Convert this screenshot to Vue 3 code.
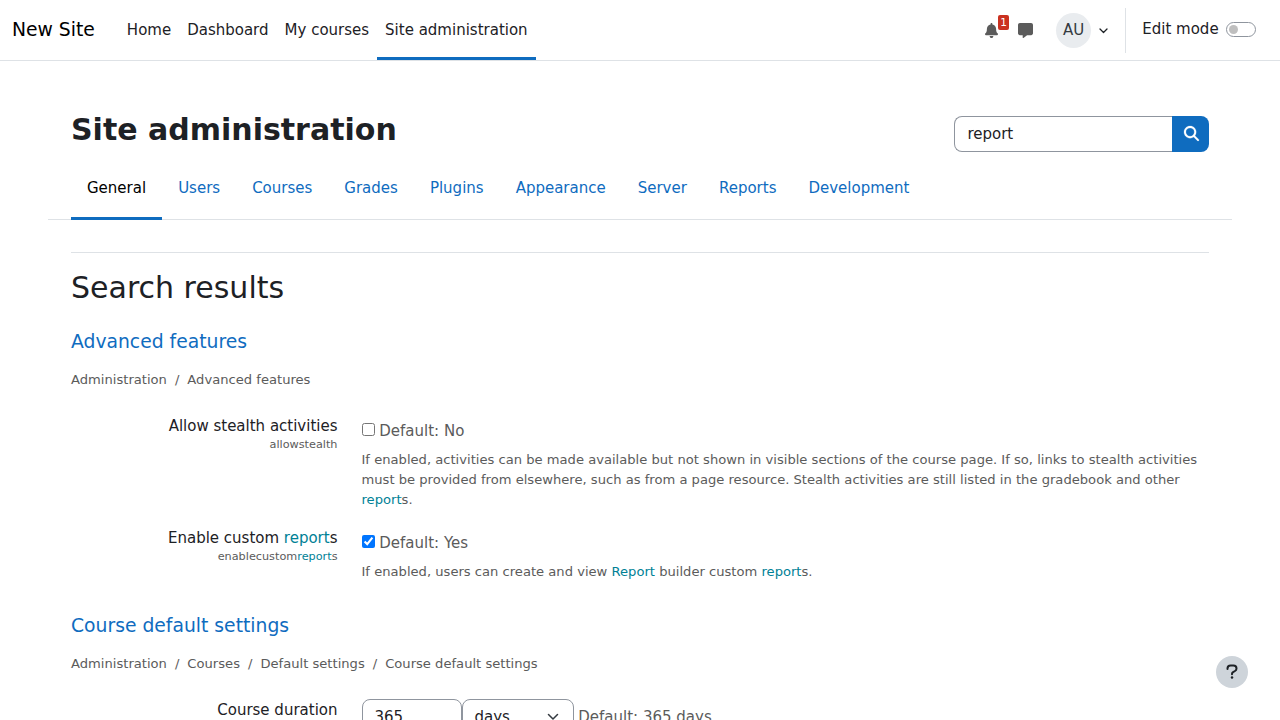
<script setup>
const menu = ['Home', 'Dashboard', 'My courses', 'Site administration']
const tabs = ['General', 'Users', 'Courses', 'Grades', 'Plugins', 'Appearance', 'Server', 'Reports', 'Development']
const crumbsA = ['Administration', 'Advanced features']
const crumbsB = ['Administration', 'Courses', 'Default settings', 'Course default settings']
</script>

<template>
  <div class="page">
    <nav class="navbar">
      <a class="brand">New Site</a>
      <ul class="menu">
        <li v-for="m in menu" :key="m" :class="{ active: m === 'Site administration' }">{{ m }}</li>
      </ul>
      <div class="usernav">
        <div class="bell">
          <svg width="13" height="15" viewBox="0 0 448 512" fill="#5b5b5b"><path d="M224 0c-17.700 0-32 14.300-32 32l0 19.200C119 66 64 130.600 64 208l0 18.800c0 47-17.300 92.400-48.500 127.600l-7.400 8.300c-8.400 9.400-10.400 22.900-5.300 34.400S19.400 416 32 416l384 0c12.600 0 24-7.400 29.200-18.900s3.100-25-5.300-34.400l-7.400-8.300C401.300 319.200 384 273.900 384 226.800l0-18.800c0-77.400-55-142-128-156.800L256 32c0-17.700-14.300-32-32-32zm45.300 493.300c12-12 18.700-28.300 18.700-45.300l-128 0c0 17 6.700 33.300 18.700 45.300s28.300 18.700 45.300 18.700s33.300-6.700 45.300-18.700z"/></svg>
          <span class="count">1</span>
        </div>
        <svg class="chat" width="15" height="15" viewBox="0 0 512 512" fill="#5b5b5b"><path d="M64 0C28.700 0 0 28.700 0 64L0 352c0 35.300 28.700 64 64 64l96 0 0 80c0 6.100 3.400 11.600 8.800 14.300s11.900 2.100 16.800-1.500L309.300 416 448 416c35.300 0 64-28.700 64-64l0-288c0-35.300-28.700-64-64-64L64 0z"/></svg>
        <span class="avatar">AU</span>
        <svg class="caret" width="9" height="6" viewBox="0 0 9 6" fill="none" stroke="#1d2125" stroke-width="1.300" stroke-linecap="round" stroke-linejoin="round"><path d="M1 1l3.500 3.500L8 1"/></svg>
        <span class="divider"></span>
        <span class="edit">Edit mode</span>
        <span class="switch"></span>
      </div>
    </nav>

    <main class="content">
      <header class="head">
        <h1>Site administration</h1>
        <form class="search" @submit.prevent>
          <input type="text" value="report" />
          <button type="submit" aria-label="Search">
            <svg width="15" height="15" viewBox="0 0 512 512" fill="#fff" stroke="#fff" stroke-width="8"><path d="M416 208c0 45.900-14.900 88.300-40 122.700L502.600 457.400c12.500 12.500 12.500 32.800 0 45.300s-32.800 12.500-45.300 0L330.700 376c-34.400 25.200-76.800 40-122.700 40C93.100 416 0 322.900 0 208S93.100 0 208 0S416 93.100 416 208zM208 352a144 144 0 1 0 0-288 144 144 0 1 0 0 288z"/></svg>
          </button>
        </form>
      </header>
      <ul class="tabs">
        <li v-for="t in tabs" :key="t" :class="{ active: t === 'General' }">{{ t }}</li>
      </ul>
      <hr />
      <h2>Search results</h2>

      <h3>Advanced features</h3>
      <ol class="crumbs"><li v-for="c in crumbsA" :key="c">{{ c }}</li></ol>
      <div class="row">
        <div class="label">Allow stealth activities<span class="short">allowstealth</span></div>
        <div class="field">
          <div class="check"><input type="checkbox" /> <span>Default: No</span></div>
          <p>If enabled, activities can be made available but not shown in visible sections of the course page. If so, links to stealth activities must be provided from elsewhere, such as from a page resource. Stealth activities are still listed in the gradebook and other <mark>report</mark>s.</p>
        </div>
      </div>
      <div class="row next">
        <div class="label">Enable custom <mark>report</mark>s<span class="short">enablecustom<mark>report</mark>s</span></div>
        <div class="field">
          <div class="check"><input type="checkbox" checked /> <span>Default: Yes</span></div>
          <p>If enabled, users can create and view <mark>Report</mark> builder custom <mark>report</mark>s.</p>
        </div>
      </div>

      <h3 class="second">Course default settings</h3>
      <ol class="crumbs"><li v-for="c in crumbsB" :key="c">{{ c }}</li></ol>
      <div class="row">
        <div class="label">Course duration</div>
        <div class="field duration">
          <input class="control num" type="text" value="365" />
          <div class="control unit">days
            <svg width="12" height="8" viewBox="0 0 12 8" fill="none" stroke="#343a40" stroke-width="1.500" stroke-linecap="round" stroke-linejoin="round"><path d="M1.500 1.500L6 6l4.500-4.500"/></svg>
          </div>
          <span class="default">Default: 365 days</span>
        </div>
      </div>
    </main>

    <button class="help" aria-label="Help">
      <svg width="12" height="16" viewBox="0 0 12 16" fill="none" stroke="#1d2125" stroke-width="2" stroke-linecap="round"><path d="M1.500 5V4.600C1.500 2.900 2.900 1.600 4.600 1.600h2.800c1.700 0 3.100 1.200 3.100 2.900 0 1.100-.6 2-1.500 2.500L7.100 8.100C6.400 8.500 6 9.100 6 9.900v.3"/><circle cx="6" cy="13.600" r="1.250" fill="#1d2125" stroke="none"/></svg>
    </button>
  </div>
</template>

<style>
body { margin: 0; background: #fff; overflow: hidden; }
</style>

<style scoped>
* { box-sizing: border-box; }
.page { height: 720px; overflow: hidden; font: 15px/1.5 "DejaVu Sans", sans-serif; color: #1d2125; }
ul, ol { list-style: none; margin: 0; padding: 0; }
input, button { font: inherit; color: inherit; }
.navbar { display: flex; height: 61px; border-bottom: 1px solid #dee2e6; padding: 0 24px 0 12px; }
.brand { font-size: 18.75px; line-height: 60px; color: #000; margin-right: 24px; white-space: nowrap; }
.menu { display: flex; }
.menu li { padding: 0 8px; line-height: 60px; height: 60px; white-space: nowrap; }
.menu li.active { box-shadow: inset 0 -3px #0f6cbf; }
.usernav { margin-left: auto; display: flex; align-items: center; height: 60px; }
.bell { position: relative; width: 13px; height: 15px; margin-right: 19.500px; }
.bell svg, .chat, .caret { display: block; }
.count { position: absolute; left: 13px; top: -8px; width: 11px; height: 15px; border-radius: 2px; background: #ca3120; color: #fff; font-size: 10.500px; line-height: 15px; text-align: center; }
.avatar { margin-left: 23px; width: 35px; height: 35px; border-radius: 50%; background: #e9ecef; color: #343a40; line-height: 35px; text-align: center; padding-left: 1px; }
.caret { margin: 2px 17px 0 8px; }
.divider { width: 1px; height: 45px; background: #dee2e6; margin-right: 16.600px; }
.edit { margin: -2px 7.400px 0 0; }
.switch { width: 30px; height: 15px; border: 1px solid #8f959e; border-radius: 8px; display: flex; align-items: center; padding-left: 2px; margin-top: -1px; }
.switch::before { content: ""; width: 9px; height: 9px; border-radius: 50%; background: #bfbfbf; }
.content { padding: 51px 71px 0; }
.head { display: flex; justify-content: space-between; height: 44px; }
h1, h2, h3 { margin: 0; line-height: 1.2; }
h1 { font-size: 30px; }
.search { display: flex; height: 36px; margin-top: 4px; }
.search input { width: 218px; border: 1px solid #8f959e; border-right: 0; border-radius: 8px 0 0 8px; padding: 0 12px 0 12.400px; outline: none; background: #fff; }
.search button { width: 37px; border: 0; padding: 0 0 2px 1px; background: #0f6cbf; border-radius: 0 8px 8px 0; display: flex; align-items: center; justify-content: center; }
.search svg { overflow: visible; }
.tabs { display: flex; margin: 0 -23px; padding: 0 23px; height: 64px; border-bottom: 1px solid #dee2e6; }
.tabs li { padding: 0 16px; height: 64px; line-height: 64px; color: #0f6cbf; }
.tabs li.active { color: #000; box-shadow: inset 0 -3px #0f6cbf; }
hr { border: 0; height: 1px; background: #dee2e6; margin: 32px 0 17px; }
h2 { font-size: 30px; font-weight: 400; }
h3 { font-size: 18.750px; line-height: 22px; font-weight: 400; color: #0f6cbf; margin-top: 25px; }
h3.second { margin-top: 33px; }
.crumbs { display: flex; font-size: 13.125px; line-height: 20px; color: #5b5b5b; margin-top: 17px; }
.crumbs li + li::before { content: "/"; padding: 0 8px; }
.row { display: flex; gap: 24px; margin-top: 25px; }
.row.next { margin-top: 17px; }
.label { width: 266.500px; flex: none; text-align: right; line-height: 22px; }
.short { display: block; font-size: 11.250px; line-height: 15px; color: #5b5b5b; }
mark { background: none; color: #008196; }
.field { flex: 1; min-width: 0; color: #5b5b5b; }
.check { height: 30px; padding-top: 3px; display: flex; align-items: center; }
.check input { width: 13px; height: 13px; margin: -5px 4.800px 0 0; flex: none; }
.field p { margin: 5px 0 0; font-size: 13.125px; line-height: 20px; }
.duration { display: flex; align-items: center; }
.control { height: 37px; border: 1px solid #8f959e; border-radius: 8px; background: #fff; padding: 0 12px; color: #1d2125; }
.num { width: 100px; padding-bottom: 2px; }
.unit { width: 112px; display: flex; align-items: center; justify-content: space-between; padding-right: 14px; }
.unit svg { margin-top: -1px; }
.default { margin-left: 4.800px; }
.help { position: fixed; right: 32px; bottom: 32px; width: 32px; height: 32px; border: 0; border-radius: 50%; padding: 0 0 1px; background: #ced4da; display: flex; align-items: center; justify-content: center; }
</style>
